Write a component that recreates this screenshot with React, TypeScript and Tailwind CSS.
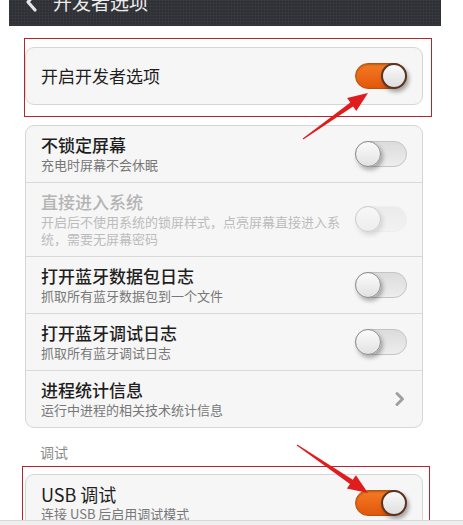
import React from 'react';

const FONT = { fontFamily: '"Noto Sans CJK SC", "Noto Sans", sans-serif' };

type ToggleProps = { on?: boolean; disabled?: boolean };

const Toggle: React.FC<ToggleProps> = ({ on, disabled }) => {
  if (on) {
    return (
      <div className="relative shrink-0 w-[52px] h-[26px] rounded-full border border-[#b9520f] bg-gradient-to-b from-[#f47a22] to-[#e2570b] shadow-[inset_0_1px_2px_rgba(0,0,0,0.25)]">
        <div className="absolute right-[-1px] top-[-1px] w-[26px] h-[26px] rounded-full border-2 border-[#5a3420] bg-gradient-to-b from-[#fafafa] to-[#dedede] shadow-[2px_3px_4px_rgba(0,0,0,0.35)]" />
      </div>
    );
  }
  return (
    <div
      className={`relative shrink-0 w-[52px] h-[26px] rounded-full border bg-gradient-to-b from-[#dcdcdc] to-[#ededed] ${
        disabled ? 'border-[#e4e4e4] opacity-40' : 'border-[#c4c4c4]'
      }`}
    >
      <div className="absolute left-[-1px] top-[-1px] w-[26px] h-[26px] rounded-full border border-[#8d8d8d] bg-gradient-to-b from-[#fbfbfb] to-[#e2e2e2] shadow-[2px_3px_4px_rgba(0,0,0,0.3)]" />
    </div>
  );
};

type RowProps = {
  title: string;
  sub?: string;
  disabled?: boolean;
  right: React.ReactNode;
  first?: boolean;
  plain?: boolean;
};

const Row: React.FC<RowProps> = ({ title, sub, disabled, right, first, plain }) => (
  <div className={`flex items-center justify-between pl-[15px] pr-[15px] pt-[8px] pb-[9px] ${first ? '' : 'border-t border-[#d9d9d9]'}`}>
    <div className="w-[306px]">
      <div
        className={`leading-[22px] ${plain ? 'text-[18px] font-normal' : 'text-[17px] font-medium'} ${
          disabled ? 'text-[#b4b4b4]' : 'text-[#1e1e1e]'
        }`}
      >
        {title}
      </div>
      {sub && (
        <div className={`text-[13px] leading-[17px] ${disabled ? 'text-[#bcbcbc]' : 'text-[#777777]'}`}>{sub}</div>
      )}
    </div>
    {right}
  </div>
);

const Chevron = () => (
  <svg width="12" height="16" viewBox="0 0 12 16" className="mr-[1px]">
    <path d="M3 2.5 L8.5 8 L3 13.5" fill="none" stroke="#a0a0a0" strokeWidth="3" strokeLinecap="round" strokeLinejoin="round" />
  </svg>
);

export default function App() {
  return (
    <div className="relative w-[463px] h-[525px] overflow-hidden bg-white" style={FONT}>
      <div className="ml-[9px] w-[432px]">
        {/* title bar */}
        <div className="h-[26px] overflow-hidden bg-[#2e3035] bg-[linear-gradient(rgba(255,255,255,0.03)_1px,transparent_1px),linear-gradient(90deg,rgba(255,255,255,0.03)_1px,transparent_1px)] bg-[size:3px_3px]">
          <div className="flex items-center mt-[-11px] h-[26px] pl-[15px]">
            <svg width="14" height="22" viewBox="0 0 14 22">
              <path d="M11 3 L4 11 L11 19" fill="none" stroke="#e6e6e6" strokeWidth="3.2" strokeLinecap="round" strokeLinejoin="round" />
            </svg>
            <span className="ml-[15px] text-[19px] text-[#ececec]">开发者选项</span>
          </div>
        </div>

        {/* developer option master switch */}
        <div className="mt-[12px] ml-[15px] w-[408px] border border-[#b3262b] pt-[8px] pb-[11px] pr-[8px]">
          <div className="w-[398px] h-[58px] flex items-center justify-between pl-[15px] pr-[15px] rounded-[9px] border border-[#d6d6d6] bg-[#f6f6f6]">
            <span className="text-[17px] text-[#1e1e1e]">开启开发者选项</span>
            <Toggle on />
          </div>
        </div>

        {/* options list */}
        <div className="mt-[8px] ml-[16px] w-[398px] rounded-[9px] border border-[#d6d6d6] bg-[#f6f6f6]">
          <Row first title="不锁定屏幕" sub="充电时屏幕不会休眠" right={<Toggle />} />
          <Row
            disabled
            title="直接进入系统"
            sub="开启后不使用系统的锁屏样式，点亮屏幕直接进入系统，需要无屏幕密码"
            right={<Toggle disabled />}
          />
          <Row title="打开蓝牙数据包日志" sub="抓取所有蓝牙数据包到一个文件" right={<Toggle />} />
          <Row title="打开蓝牙调试日志" sub="抓取所有蓝牙调试日志" right={<Toggle />} />
          <Row title="进程统计信息" sub="运行中进程的相关技术统计信息" right={<Chevron />} />
        </div>

        <div className="mt-[14px] ml-[31px] text-[14px] leading-[20px] text-[#8a8a8a]">调试</div>

        {/* usb debugging */}
        <div className="mt-[4px] ml-[13px] w-[408px] border border-[#b3262b] pt-[7px] pl-[2px] pr-[6px] h-[80px]">
          <div className="w-[398px] h-[57px] rounded-[9px] border border-[#d6d6d6] bg-[#f6f6f6]">
            <Row first plain title="USB 调试" sub="连接 USB 后启用调试模式" right={<Toggle on />} />
          </div>
        </div>
      </div>

      {/* annotation arrows */}
      <svg className="absolute inset-0 pointer-events-none" width="463" height="525" viewBox="0 0 463 525">
        <polygon
          points="303.3,139.4 353.1,106.6 356.3,111.1 368,93 347.1,98.1 350.3,102.6 302.7,138.6"
          fill="#e01c1c"
        />
        <polygon
          points="296.7,445.4 350.0,483.9 346.9,488.4 368,493 355.9,475.2 352.8,479.7 297.3,444.6"
          fill="#e01c1c"
        />
      </svg>

      {/* bottom strip */}
      <div className="absolute left-0 right-0 bottom-0 h-[5px] bg-[#efefef] border-t border-[#d8d8d8]" />
    </div>
  );
}
